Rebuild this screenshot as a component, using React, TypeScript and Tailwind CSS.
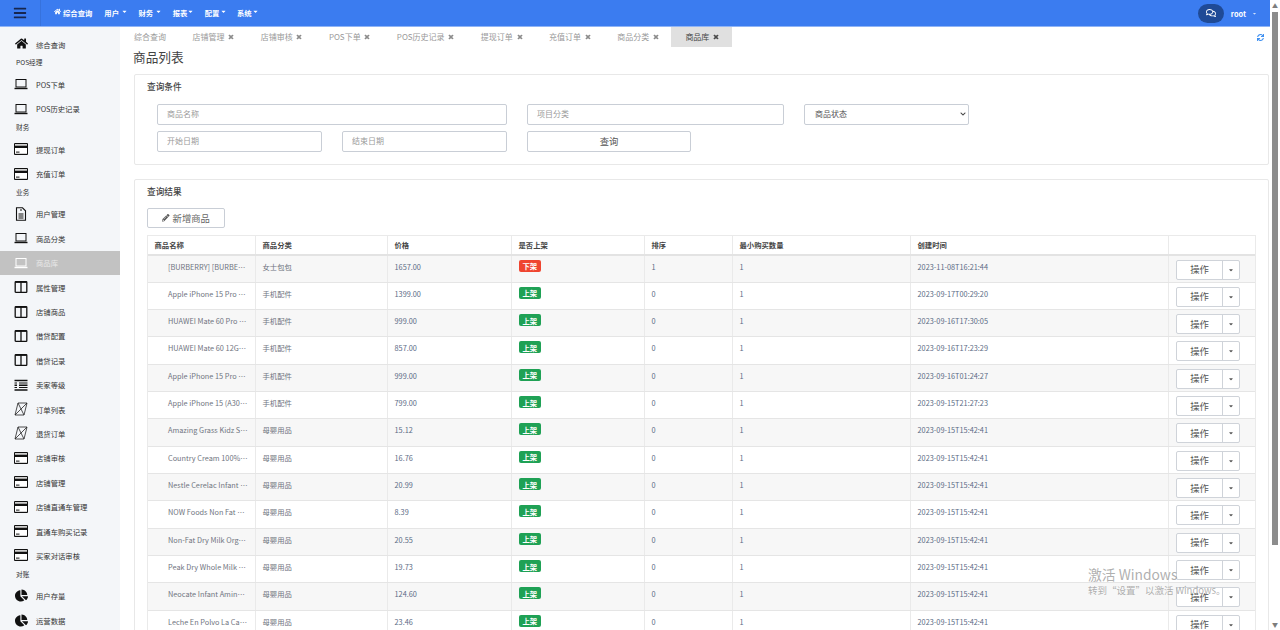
import { FaBars, FaCaretDown, FaChartPie, FaChevronDown, FaHome, FaPencilAlt, FaRegComments, FaSync, FaTimes } from 'react-icons/fa';

const font = 'font-["Noto_Sans_CJK_SC","Noto_Sans",sans-serif]';

function Laptop() {
  return (
    <svg viewBox="0 0 14 14" className="w-[14px] h-[14px]" fill="none" stroke="#111" strokeWidth="1">
      <rect x="2" y="2.5" width="10" height="7.5" />
      <path d="M0.5 11.5h13" strokeWidth="1.4" />
    </svg>
  );
}

function Card() {
  return (
    <svg viewBox="0 0 14 14" className="w-[14px] h-[14px]">
      <rect x="0" y="1" width="14" height="12" rx="1" fill="#111" />
      <rect x="1" y="2.2" width="12" height="1.4" fill="#fff" />
      <rect x="1" y="6" width="12" height="5.8" fill="#fff" />
      <rect x="2" y="9.6" width="3.5" height="1" fill="#111" />
    </svg>
  );
}

function FileIcon() {
  return (
    <svg viewBox="0 0 14 14" className="w-[14px] h-[14px]" fill="none" stroke="#111" strokeWidth="1.1">
      <path d="M2.5 0.8h6l3 3v9.4h-9z" />
      <path d="M4.5 7h5M4.5 9h5M4.5 11h5M6 3h2" />
    </svg>
  );
}

function Columns() {
  return (
    <svg viewBox="0 0 14 14" className="w-[14px] h-[14px]" fill="none" stroke="#111" strokeWidth="1.3">
      <rect x="1.2" y="1.7" width="11.6" height="10.6" rx="0.6" />
      <path d="M7 1.7v10.6" />
      <path d="M1.2 2.4h11.6" strokeWidth="1" />
    </svg>
  );
}

function Tasks() {
  return (
    <svg viewBox="0 0 14 14" className="w-[14px] h-[14px]" stroke="#111" fill="none">
      <path d="M0.5 2.5h13" strokeWidth="1.5" />
      <path d="M0.5 5h2.5M5 5h8.5" strokeWidth="1" />
      <path d="M0.5 7.3h2.5M5 7.3h8.5" strokeWidth="1.5" />
      <path d="M0.5 9.5h2.5M5 9.5h8.5" strokeWidth="1" />
      <path d="M0.5 12h13" strokeWidth="1.5" />
    </svg>
  );
}

function Skew() {
  return (
    <svg viewBox="0 0 14 14" className="w-[14px] h-[14px]" fill="none" stroke="#222" strokeWidth="0.8">
      <path d="M4 1h9l-3 12H1z" />
      <path d="M4 1l6 12M13 1L1 13" />
    </svg>
  );
}

function Pie() {
  return <FaChartPie className="w-[13px] h-[13px] text-[#111]" />;
}

function Home() {
  return <FaHome className="w-[13px] h-[13px] text-[#111]" />;
}

type SideEntry = { heading: string } | { label: string; icon: () => React.ReactNode; active?: boolean };

const sidebar: SideEntry[] = [
  { label: '综合查询', icon: Home },
  { heading: 'POS经理' },
  { label: 'POS下单', icon: Laptop },
  { label: 'POS历史记录', icon: Laptop },
  { heading: '财务' },
  { label: '提现订单', icon: Card },
  { label: '充值订单', icon: Card },
  { heading: '业务' },
  { label: '用户管理', icon: FileIcon },
  { label: '商品分类', icon: Laptop },
  { label: '商品库', icon: Laptop, active: true },
  { label: '属性管理', icon: Columns },
  { label: '店铺商品', icon: Columns },
  { label: '借贷配置', icon: Columns },
  { label: '借贷记录', icon: Columns },
  { label: '卖家等级', icon: Tasks },
  { label: '订单列表', icon: Skew },
  { label: '退货订单', icon: Skew },
  { label: '店铺审核', icon: Card },
  { label: '店铺管理', icon: Card },
  { label: '店铺直通车管理', icon: Card },
  { label: '直通车购买记录', icon: Card },
  { label: '买家对话审核', icon: Card },
  { heading: '对账' },
  { label: '用户存量', icon: Pie },
  { label: '运营数据', icon: Pie },
];

const tabs = ['综合查询', '店铺管理', '店铺审核', 'POS下单', 'POS历史记录', '提现订单', '充值订单', '商品分类', '商品库'];

const navMenus = [
  { label: '用户', gap: 'ml-[2.5px]', after: 'mr-[10px]' },
  { label: '财务', gap: 'ml-[1.5px]', after: 'mr-[11px]' },
  { label: '报表', gap: '-ml-[0.5px]', after: 'mr-[11px]' },
  { label: '配置', gap: 'ml-[0.5px]', after: 'mr-[10px]' },
  { label: '系统', gap: 'ml-[0.5px]', after: '' },
];

const rows = [
  ['[BURBERRY] [BURBE经典手提包', '女士包包', '1657.00', false, '1', '2023-11-08T16:21:44'],
  ['Apple iPhone 15 Pro 钛金属 256GB', '手机配件', '1399.00', true, '0', '2023-09-17T00:29:20'],
  ['HUAWEI Mate 60 Pro 雅川青 512GB', '手机配件', '999.00', true, '0', '2023-09-16T17:30:05'],
  ['HUAWEI Mate 60 12G雅川青 256GB', '手机配件', '857.00', true, '0', '2023-09-16T17:23:29'],
  ['Apple iPhone 15 Pro 钛金属 128GB', '手机配件', '999.00', true, '0', '2023-09-16T01:24:27'],
  ['Apple iPhone 15 (A30双卡双待 128GB', '手机配件', '799.00', true, '0', '2023-09-15T21:27:23'],
  ['Amazing Grass Kidz Superfood', '母婴用品', '15.12', true, '0', '2023-09-15T15:42:41'],
  ['Country Cream 100%全脂奶粉', '母婴用品', '16.76', true, '0', '2023-09-15T15:42:41'],
  ['Nestle Cerelac Infant 婴儿米粉', '母婴用品', '20.99', true, '0', '2023-09-15T15:42:41'],
  ['NOW Foods Non Fat 脱脂奶粉', '母婴用品', '8.39', true, '0', '2023-09-15T15:42:41'],
  ['Non-Fat Dry Milk Org有机奶粉', '母婴用品', '20.55', true, '0', '2023-09-15T15:42:41'],
  ['Peak Dry Whole Milk 全脂奶粉', '母婴用品', '19.73', true, '0', '2023-09-15T15:42:41'],
  ['Neocate Infant Amin氨基酸配方', '母婴用品', '124.60', true, '0', '2023-09-15T15:42:41'],
  ['Leche En Polvo La Campesina', '母婴用品', '23.46', true, '0', '2023-09-15T15:42:41'],
] as const;

const cols = 'grid grid-cols-[108px_132px_124px_133px_88px_178px_258px_87px]';
const inputClass =
  'block h-[20.5px] rounded-[2px] border border-[#c9ced6] bg-white px-[9px] pb-[1.5px] text-[8px] text-[#555] placeholder:text-[#9a9a9a] outline-none';

export default function App() {
  return (
    <div className={`${font} flex h-[630px] w-[1280px] overflow-hidden bg-white relative`}>
      <div className="w-[1270px] shrink-0 flex flex-col">
        <header className="h-[27px] shrink-0 bg-[#3b7cf0] border-b border-[#8fb4f6] flex items-center text-white">
          <div className="w-[41px] h-full flex items-center justify-center border-r border-[#3672dd]">
            <FaBars className="w-[14px] h-[14px] text-[#16264f]" />
          </div>
          <nav className="flex items-center ml-[13px] -mt-[2px] text-[7.33px] font-bold">
            <FaHome className="w-[7px] h-[7px] mr-[2px]" />
            <span className="mr-[12px]">综合查询</span>
            {navMenus.map((m) => (
              <span key={m.label} className={`flex items-center ${m.after}`}>
                {m.label}
                <FaCaretDown className={`w-[7px] h-[7px] ${m.gap}`} />
              </span>
            ))}
          </nav>
          <div className="ml-auto flex items-center">
            <div className="w-[26px] h-[19px] rounded-full bg-[#1f4a96] flex items-center justify-center">
              <FaRegComments className="w-[10px] h-[10px]" />
            </div>
            <span className="ml-[7px] text-[7.33px] font-bold">root</span>
            <FaCaretDown className="w-[5px] h-[5px] ml-[6px] mr-[13px] text-[#cfe0fb]" />
          </div>
        </header>

        <div className="flex flex-1 min-h-0">
          <aside className="w-[120px] shrink-0 bg-[#f4f6f9] overflow-hidden">
            <div className="h-[4.8px]" />
            {sidebar.map((entry, i) =>
              'heading' in entry ? (
                <div key={i} className="h-[16px] pl-[16px] text-[6.67px] leading-[12px] text-[#333]">
                  {entry.heading}
                </div>
              ) : (
                <div
                  key={i}
                  className={`h-[24.4px] flex items-center pl-[14px] text-[7.33px] ${
                    entry.active ? 'bg-[#c2c2c2] text-[#e8e8e8]' : 'text-[#333]'
                  }`}
                >
                  <span
                    className={`w-[14px] flex justify-center mr-[8px] ${entry.active ? 'brightness-0 invert' : ''}`}
                  >
                    <entry.icon />
                  </span>
                  {entry.label}
                </div>
              ),
            )}
          </aside>

          <main className="flex-1 min-w-0 overflow-hidden">
            <div className="flex items-center h-[20px]">
              {tabs.map((t, i) => {
                const active = i === tabs.length - 1;
                return (
                  <div
                    key={t}
                    className={`h-full flex items-center pl-[14px] pr-[12.5px] text-[8px] ${
                      active ? 'bg-[#e0e0e0] text-[#444]' : 'text-[#999]'
                    }`}
                  >
                    {t}
                    {i > 0 && (
                      <FaTimes
                        stroke="currentColor"
                        strokeWidth={50}
                        className={`w-[6px] h-[6px] ml-[3.7px] ${active ? 'text-[#444]' : 'text-[#888]'}`}
                      />
                    )}
                  </div>
                );
              })}
              <FaSync className="ml-auto mr-[6px] w-[7px] h-[7px] text-[#3b8df0]" />
            </div>

            <div className="pl-[14px] pr-[1px]">
              <h1 className="h-[27px] -ml-[1px] text-[12.67px] leading-[20px] text-[#444]">商品列表</h1>

              <section className="border border-[#e8e8e8] rounded-[2px] h-[91px] pt-[5px] pl-[12px]">
                <h2 className="text-[8.67px] leading-[13px] font-medium text-[#444]">查询条件</h2>
                <div className="mt-[11px] ml-[10px] flex gap-[20px]">
                  <input placeholder="商品名称" className={`${inputClass} w-[350px]`} />
                  <input placeholder="项目分类" className={`${inputClass} w-[257px]`} />
                  <div className="relative w-[165px] h-[20.5px]">
                    <select className={`${inputClass} w-full px-[10px] appearance-none`} defaultValue="">
                      <option value="">商品状态</option>
                    </select>
                    <FaChevronDown className="absolute right-[3px] top-[7px] w-[6px] h-[6px] text-[#444]" />
                  </div>
                </div>
                <div className="mt-[6.5px] ml-[10px] flex gap-[20px]">
                  <input placeholder="开始日期" className={`${inputClass} w-[165px]`} />
                  <input placeholder="结束日期" className={`${inputClass} w-[165px]`} />
                  <button className="h-[20.5px] w-[164px] rounded-[2px] border border-[#c9ced6] pb-[1px] text-[9.33px] text-[#555]">
                    查询
                  </button>
                </div>
              </section>

              <section className="mt-[14px] border border-[#e8e8e8] rounded-[2px] pt-[5px] pl-[12px]">
                <h2 className="text-[8.67px] leading-[13px] font-medium text-[#444]">查询结果</h2>
                <button className="mt-[10px] h-[20px] w-[78px] rounded-[2px] border border-[#c9ced6] flex items-center justify-center text-[9.33px] text-[#666]">
                  <FaPencilAlt className="w-[7.5px] h-[7.5px] mr-[3px] text-[#555]" />
                  新增商品
                </button>

                <div className="mt-[6.5px] w-[1109px] border border-[#eaeaea] border-b-0">
                  <div className={`${cols} h-[20px] border-b-2 border-[#e3e3e3] text-[7.33px] font-bold text-[#444]`}>
                    {['商品名称', '商品分类', '价格', '是否上架', '排序', '最小购买数量', '创建时间', ''].map((h, i) => (
                      <div key={i} className="flex items-center pl-[6.5px] pb-[1px] border-r border-[#eaeaea] last:border-r-0">
                        {h}
                      </div>
                    ))}
                  </div>
                  {rows.map((r, i) => (
                    <div
                      key={i}
                      className={`${cols} h-[27.33px] border-b border-[#e5e5e5] text-[7.33px] leading-[11px] text-[#6f7480] ${
                        i % 2 === 0 ? 'bg-[#f7f7f7]' : 'bg-white'
                      }`}
                    >
                      <div className="pl-[20px] pr-[4px] pt-[5px] border-r border-[#eaeaea] truncate">{r[0]}</div>
                      <div className="pl-[6.5px] pt-[5px] border-r border-[#eaeaea]">{r[1]}</div>
                      <div className="pl-[6.5px] pt-[5px] border-r border-[#eaeaea] text-[#5b6b85]">{r[2]}</div>
                      <div className="pl-[6.5px] pt-[4px] border-r border-[#eaeaea]">
                        <span
                          className={`inline-flex items-center justify-center w-[22.7px] h-[12px] rounded-[2px] text-white font-bold ${
                            r[3] ? 'bg-[#1fa155]' : 'bg-[#ef4530]'
                          }`}
                        >
                          {r[3] ? '上架' : '下架'}
                        </span>
                      </div>
                      <div className="pl-[6.5px] pt-[5px] border-r border-[#eaeaea] text-[#5b6b85]">{r[4]}</div>
                      <div className="pl-[6.5px] pt-[5px] border-r border-[#eaeaea] text-[#5b6b85]">1</div>
                      <div className="pl-[6.5px] pt-[5px] border-r border-[#eaeaea] text-[#5b6b85]">{r[5]}</div>
                      <div className="pl-[7px] pt-[4px]">
                        <div className="flex w-[64px] h-[20px] rounded-[2px] border border-[#cfd3d9] bg-white">
                          <span className="w-[46px] flex items-center justify-center border-r border-[#cfd3d9] text-[9.33px] text-[#555]">
                            操作
                          </span>
                          <span className="flex-1 flex items-center justify-center">
                            <FaCaretDown className="w-[6px] h-[6px] text-[#555]" />
                          </span>
                        </div>
                      </div>
                    </div>
                  ))}
                </div>
              </section>
            </div>
          </main>
        </div>
      </div>

      <div className="w-[10px] shrink-0 flex flex-col items-center bg-white text-[#7d7d7d]">
        <div className="h-[12px] flex items-center text-[6px] leading-none">▲</div>
        <div className="w-[6px] h-[533px] bg-[#8c8c8c]" />
        <div className="mt-auto h-[10px] flex items-center text-[6px] leading-none">▼</div>
      </div>

      <div className="absolute left-[1088px] top-[566px] text-[#9b9b9b]/80 pointer-events-none">
        <div className="text-[13.8px] leading-[17px]">激活 Windows</div>
        <div className="text-[9.5px] leading-[13px] mt-[1px]">转到“设置”以激活 Windows。</div>
      </div>
    </div>
  );
}
